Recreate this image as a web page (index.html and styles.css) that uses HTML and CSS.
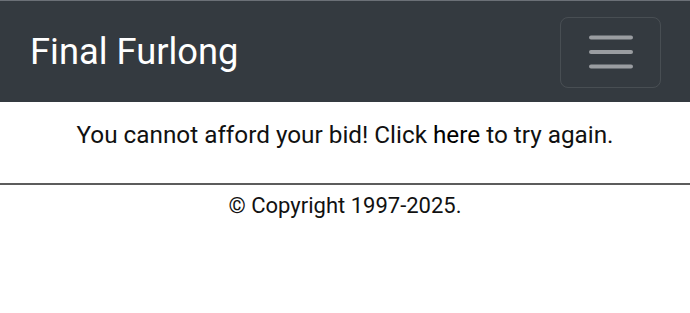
FILE: index.html
```html
<!DOCTYPE html>
<html lang="en">
<head>
<meta charset="utf-8">
<title>Final Furlong</title>
<link rel="stylesheet" href="styles.css">
</head>
<body>
<nav class="navbar">
  <a class="brand" href="#">Final Furlong</a>
  <button class="toggler" type="button" aria-label="Toggle navigation">
    <svg class="toggler-icon" width="44" height="34" viewBox="0 0 44 34">
      <g stroke="#9a9da1" stroke-width="4" stroke-linecap="round">
        <line x1="2" y1="2.5" x2="42" y2="2.5"/>
        <line x1="2" y1="17" x2="42" y2="17"/>
        <line x1="2" y1="31.5" x2="42" y2="31.5"/>
      </g>
    </svg>
  </button>
</nav>
<main class="content">
  <p class="message">You cannot afford your bid! Click <a class="link" href="#">here</a> to try again.</p>
</main>
<hr class="divider">
<footer class="footer">© Copyright 1997-2025.</footer>
</body>
</html>
```
FILE: styles.css
```css
html, body {
  margin: 0;
  padding: 0;
  background: #ffffff;
}
body {
  font-family: Roboto, "Liberation Sans", sans-serif;
  color: #212529;
}
.navbar {
  box-sizing: border-box;
  height: 102px;
  background: #343a40;
  border-top: 1px solid #6b7077;
  display: flex;
  align-items: center;
  justify-content: space-between;
  padding: 0 29px 0 30px;
}
.brand {
  font-size: 36.3px;
  line-height: 42px;
  color: #ffffff;
  text-decoration: none;
}
.toggler {
  box-sizing: border-box;
  width: 101px;
  height: 71px;
  margin-top: 1px;
  border: 1.5px solid rgba(255, 255, 255, 0.1);
  border-radius: 8px;
  background: transparent;
  display: flex;
  align-items: center;
  justify-content: center;
  padding: 0;
}
.toggler-icon {
  display: block;
}
.content {
  padding-top: 18px;
  text-align: center;
}
.message {
  margin: 0 0 33px;
  font-size: 24.3px;
  line-height: 30px;
  color: #111111;
}
.link {
  color: #000000;
  text-decoration: none;
}
.divider {
  margin: 0;
  border: 0;
  height: 2px;
  background: #5c5c5c;
}
.footer {
  padding-top: 6px;
  text-align: center;
  font-size: 22px;
  line-height: 30px;
  color: #111111;
}
```
